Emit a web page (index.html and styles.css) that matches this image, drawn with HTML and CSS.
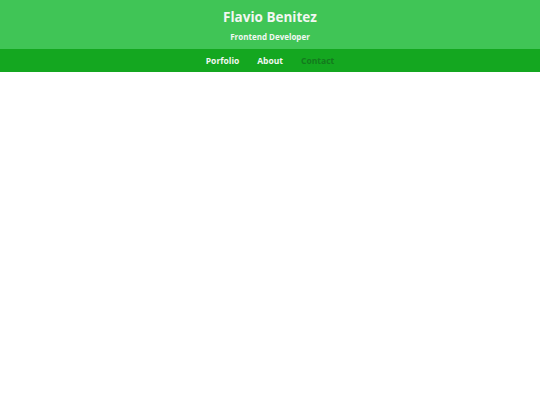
FILE: index.html
```html
<!DOCTYPE html>
<html>
<head>
<meta charset="utf-8">
<link rel="stylesheet" href="styles.css">
</head>
<body>
<header class="header">
  <h1 class="title">Flavio Benitez</h1>
  <p class="subtitle">Frontend Developer</p>
</header>
<nav class="nav">
  <a class="nav-link" href="#">Porfolio</a>
  <a class="nav-link" href="#">About</a>
  <a class="nav-link nav-link-active" href="#">Contact</a>
</nav>
</body>
</html>
```
FILE: styles.css
```css
html, body {
  margin: 0;
  padding: 0;
  background: #ffffff;
  font-family: "Open Sans", "Liberation Sans", sans-serif;
}
.header {
  background: #40c556;
  height: 49px;
  display: flex;
  flex-direction: column;
  align-items: center;
  box-sizing: border-box;
  padding-top: 8px;
}
.title {
  margin: 0;
  font-size: 13.5px;
  font-weight: 700;
  color: #f2f7f2;
  line-height: 18px;
}
.subtitle {
  margin: 5px 0 0;
  font-size: 8px;
  font-weight: 700;
  color: #f2f7f2;
  line-height: 12px;
}
.nav {
  background: #14a720;
  height: 23px;
  display: flex;
  justify-content: center;
  align-items: center;
  gap: 18px;
}
.nav-link {
  font-size: 8.5px;
  font-weight: 700;
  color: #f2f7f2;
  text-decoration: none;
}
.nav-link-active {
  color: #137a1d;
}
```
